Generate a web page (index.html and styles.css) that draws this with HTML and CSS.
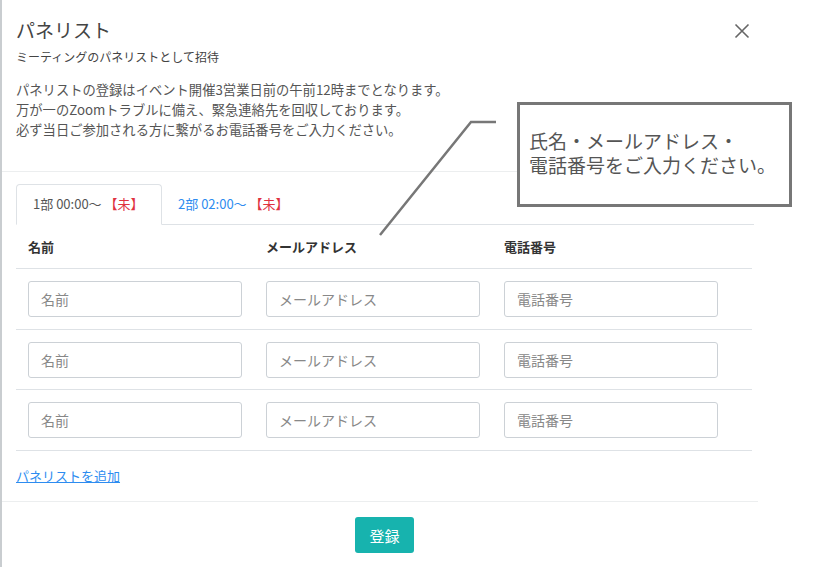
FILE: index.html
```html
<!DOCTYPE html>
<html lang="ja">
<head>
<meta charset="utf-8">
<link rel="stylesheet" href="styles.css">
</head>
<body>
<div class="modal">
  <div class="modal-header">
    <div class="head-top">
      <h1 class="title">パネリスト</h1>
      <svg class="close" width="16" height="16" viewBox="0 0 16 16"><path d="M1.5 1.5L14.5 14.5M14.5 1.5L1.5 14.5" stroke="#666" stroke-width="1.6" fill="none"/></svg>
    </div>
    <div class="subtitle">ミーティングのパネリストとして招待</div>
    <p class="notice">パネリストの登録はイベント開催3営業日前の午前12時までとなります。<br>万が一のZoomトラブルに備え、緊急連絡先を回収しております。<br>必ず当日ご参加される方に繋がるお電話番号をご入力ください。</p>
  </div>
  <div class="modal-body">
    <ul class="tabs">
      <li class="tab active">1部 00:00～ <span class="mark">【未】</span></li>
      <li class="tab link">2部 02:00～ <span class="mark">【未】</span></li>
    </ul>
    <table class="grid">
      <thead>
        <tr><th class="c1">名前</th><th class="c2">メールアドレス</th><th class="c3">電話番号</th></tr>
      </thead>
      <tbody>
        <tr><td><input class="field" placeholder="名前"></td><td><input class="field" placeholder="メールアドレス"></td><td><input class="field" placeholder="電話番号"></td></tr>
        <tr><td><input class="field" placeholder="名前"></td><td><input class="field" placeholder="メールアドレス"></td><td><input class="field" placeholder="電話番号"></td></tr>
        <tr><td><input class="field" placeholder="名前"></td><td><input class="field" placeholder="メールアドレス"></td><td><input class="field" placeholder="電話番号"></td></tr>
      </tbody>
    </table>
    <a class="add" href="#">パネリストを追加</a>
  </div>
  <div class="modal-footer">
    <button class="submit">登録</button>
  </div>
</div>
<svg class="leader" width="832" height="567" viewBox="0 0 832 567"><polyline points="380,235 471,122 496,122" fill="none" stroke="#777" stroke-width="2.5"/></svg>
<div class="callout"><div class="callout-line">氏名・メールアドレス・</div><div class="callout-line">電話番号をご入力ください。</div></div>
</body>
</html>
```
FILE: styles.css
```css
html, body {
  margin: 0;
  padding: 0;
  background: #fff;
}
body {
  font-family: "Noto Sans CJK JP", "Noto Sans", sans-serif;
  color: #555;
  width: 832px;
  height: 567px;
  overflow: hidden;
  position: relative;
}
.modal {
  width: 758px;
  height: 567px;
  border-left: 2px solid #c9cdd0;
  box-sizing: border-box;
  background: #fff;
}
.modal-header {
  padding: 16px 0 31px 14px;
  border-bottom: 1px solid #eceeef;
}
.head-top {
  display: flex;
  align-items: center;
  justify-content: space-between;
  padding-right: 8px;
}
.title {
  margin: 0;
  font-size: 19px;
  font-weight: 400;
  line-height: 28px;
  color: #444;
}
.close {
  margin-top: 2px;
}
.subtitle {
  margin-top: 4px;
  font-size: 12px;
  line-height: 18px;
  color: #444;
}
.notice {
  margin: 14px 0 0;
  font-size: 13.3px;
  line-height: 20px;
  color: #555;
}
.modal-body {
  padding: 12px 4px 0 14px;
}
.tabs {
  list-style: none;
  margin: 0;
  padding: 0;
  display: flex;
  border-bottom: 1px solid #dee2e6;
  height: 40px;
}
.tab {
  padding: 0 16px;
  font-size: 13px;
  line-height: 40px;
  color: #555;
  white-space: nowrap;
}
.tab.active {
  border: 1px solid #dee2e6;
  border-bottom-color: #fff;
  border-radius: 4px 4px 0 0;
  line-height: 38px;
  box-sizing: border-box;
  background: #fff;
  margin-bottom: -1px;
  height: 41px;
  width: 146px;
}
.tab.link {
  color: #2d8cf0;
}
.mark {
  color: #e0323f;
}
.grid {
  width: 736px;
  border-collapse: collapse;
}
.grid th {
  text-align: left;
  font-size: 13px;
  font-weight: 700;
  color: #333;
  height: 43px;
  padding: 0 12px;
  border-bottom: 1px solid #dee2e6;
}
.grid .c1, .grid .c2 { width: 214px; }
.grid td {
  padding: 0 12px;
  height: 60px;
  border-bottom: 1px solid #dee2e6;
}
.grid tbody tr:nth-child(2) td {
  height: 59px;
}
.field {
  display: block;
  width: 214px;
  height: 36px;
  box-sizing: border-box;
  border: 1px solid #ccd1d6;
  border-radius: 3px;
  padding: 0 12px;
  font-family: "Noto Sans CJK JP", sans-serif;
  font-size: 14px;
  color: #555;
  background: #fff;
}
.field::placeholder {
  color: #888;
}
.add {
  display: inline-block;
  margin: 15px 0 15px;
  font-size: 13px;
  line-height: 20px;
  color: #2d8cf0;
  text-decoration: underline;
}
.modal-footer {
  border-top: 1px solid #eceeef;
  padding-top: 15px;
  display: flex;
  justify-content: center;
}
.submit {
  width: 59px;
  height: 36px;
  border: none;
  border-radius: 3px;
  background: #17b3ae;
  color: #fff;
  font-family: "Noto Sans CJK JP", sans-serif;
  font-size: 15px;
  padding: 0;
  margin-left: 9px;
}
.leader {
  position: absolute;
  left: 0;
  top: 0;
  pointer-events: none;
}
.callout {
  position: absolute;
  left: 517px;
  top: 102px;
  width: 275px;
  height: 105px;
  box-sizing: border-box;
  border: 3px solid #777;
  background: #fff;
  padding: 24px 0 0 9px;
  color: #555;
  white-space: nowrap;
}
.callout-line {
  font-size: 19px;
  line-height: 24px;
}
```
